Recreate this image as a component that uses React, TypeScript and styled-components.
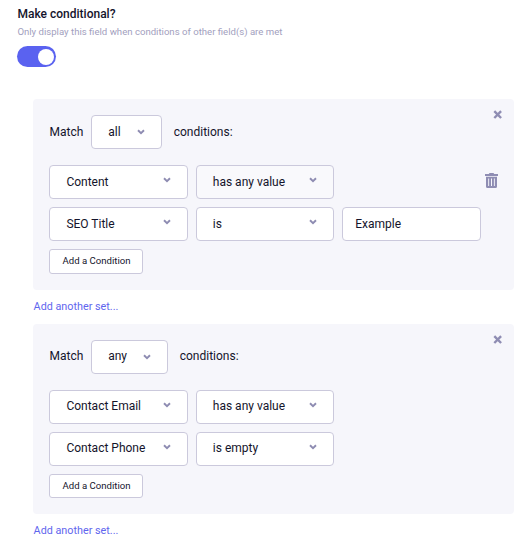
import React from "react";
import styled, { createGlobalStyle } from "styled-components";

const GlobalStyle = createGlobalStyle`
  * { box-sizing: border-box; }
  body {
    margin: 0;
    background: #fff;
    color: #14142b;
    font-family: Roboto, "Liberation Sans", sans-serif;
    font-size: 12px;
    line-height: 16px;
  }
  button, input { font: inherit; color: inherit; }
`;

const Page = styled.main`
  width: 530px;
  height: 560px;
  padding: 6px 16px 0 17px;
  overflow: hidden;
`;

const Title = styled.h1`
  margin: 0;
  padding-left: 0.5px;
  font-size: 12px;
  font-weight: 500;
  line-height: 16px;
`;

const Hint = styled.p`
  margin: 3px 0 0;
  padding-left: 0.4px;
  font-size: 9.6px;
  line-height: 14px;
  color: #a2a0be;
`;

const Toggle = styled.button`
  display: flex;
  justify-content: flex-end;
  align-items: center;
  width: 39px;
  height: 21px;
  margin: 7px 0 32px;
  padding: 0 2px;
  border: 0;
  border-radius: 11px;
  background: #5a62f0;
`;

const Knob = styled.span`
  width: 16px;
  height: 16px;
  border-radius: 50%;
  background: #fff;
`;

const Panel = styled.section<{ $height: number }>`
  position: relative;
  height: ${(p) => p.$height}px;
  margin-left: 16px;
  padding: 16px;
  border-radius: 4px;
  background: #f6f6fb;
`;

const Close = styled.button`
  position: absolute;
  top: 11px;
  right: 12px;
  display: flex;
  padding: 0;
  border: 0;
  background: none;
`;

const MatchRow = styled.div`
  display: flex;
  align-items: center;
  height: 34px;
  margin-bottom: 16px;
`;

const MatchLabel = styled.span<{ $shift: number }>`
  width: 42px;
  padding-left: 0.5px;
  padding-bottom: ${(p) => p.$shift}px;
`;

const MatchTail = styled.span<{ $shift: number }>`
  margin-left: 11.7px;
  padding-bottom: ${(p) => p.$shift}px;
`;

const SelectBox = styled.button<{ $width: number; $inset: number; $muted?: boolean }>`
  display: flex;
  align-items: center;
  justify-content: space-between;
  flex: none;
  width: ${(p) => p.$width}px;
  height: 34px;
  padding: 0 16px 0 ${(p) => p.$inset}px;
  border: 1px solid #cbc9dc;
  border-radius: 4px;
  background: ${(p) => (p.$muted ? "#f9f9fc" : "#fff")};
  text-align: left;
`;

const SelectText = styled.span<{ $shift: number }>`
  padding-bottom: ${(p) => p.$shift}px;
`;

const ChevronSlot = styled.span<{ $shift: number }>`
  display: flex;
  padding-bottom: ${(p) => p.$shift}px;
`;

const Row = styled.div`
  display: flex;
  gap: 8px;
  margin-bottom: 8px;
`;

const ValueInput = styled.input`
  width: 139px;
  height: 34px;
  padding: 0 12.2px 1px;
  border: 1px solid #cbc9dc;
  border-radius: 4px;
  background: #fff;
  outline: none;
`;

const Trash = styled.button`
  display: flex;
  align-items: center;
  margin: 0 0 0 auto;
  padding: 0 0 3px;
  border: 0;
  background: none;
`;

const AddCondition = styled.button<{ $height: number }>`
  display: block;
  width: 94px;
  height: ${(p) => p.$height}px;
  padding: 0 0 1px 1px;
  border: 1px solid #cbc9dc;
  border-radius: 3px;
  background: #fff;
  font-size: 9.6px;
  line-height: 20px;
`;

const AddSet = styled.a`
  display: block;
  width: max-content;
  height: 34px;
  margin-left: 16.6px;
  padding-top: 9px;
  font-size: 10.8px;
  color: #5f66ee;
`;

const Chevron = () => (
  <svg width="8" height="6" viewBox="0 0 8 6" fill="none">
    <path d="M1 1.2 4 4.1 7 1.2" stroke="#8e8cb2" strokeWidth="1.9" />
  </svg>
);

const Cross = () => (
  <svg width="9" height="9" viewBox="0 0 9 9" fill="none">
    <path d="m1.3 1.2 6.8 6.8m0-6.8L1.3 8" stroke="#8f8db3" strokeWidth="2.4" />
  </svg>
);

const TrashIcon = () => (
  <svg width="13" height="15" viewBox="0 0 13 15">
    <path fill="#8f8db3" d="M4.5 0h4l.7 1H13v2H0V1h3.8z" />
    <path
      fill="#8f8db3"
      fillRule="evenodd"
      d="M1 3.7h11v9.8a1.5 1.5 0 0 1-1.5 1.5h-8A1.5 1.5 0 0 1 1 13.5zM3.2 5.5v7.5h.9V5.5zm2.8 0v7.5h1V5.5zm2.9 0v7.5h.9V5.5z"
    />
  </svg>
);

type SelectProps = {
  value: string;
  width: number;
  inset?: number;
  muted?: boolean;
  shift: number;
  lift?: number;
};

const Select = ({ value, width, inset = 16.4, muted, shift, lift = 4 }: SelectProps) => (
  <SelectBox type="button" $width={width} $inset={inset} $muted={muted}>
    <SelectText $shift={shift}>{value}</SelectText>
    <ChevronSlot $shift={lift}>
      <Chevron />
    </ChevronSlot>
  </SelectBox>
);

type Condition = { field: string; operator: string; value?: string; active?: boolean };
type ConditionSet = {
  match: string;
  matchWidth: number;
  height: number;
  buttonHeight: number;
  shift: number;
  conditions: Condition[];
};

const sets: ConditionSet[] = [
  {
    match: "all",
    matchWidth: 71,
    height: 191,
    buttonHeight: 25,
    shift: 0,
    conditions: [
      { field: "Content", operator: "has any value", active: true },
      { field: "SEO Title", operator: "is", value: "Example" },
    ],
  },
  {
    match: "any",
    matchWidth: 77,
    height: 190,
    buttonHeight: 24,
    shift: 2,
    conditions: [
      { field: "Contact Email", operator: "has any value" },
      { field: "Contact Phone", operator: "is empty" },
    ],
  },
];

export default function App() {
  return (
    <Page>
      <GlobalStyle />
      <Title>Make conditional?</Title>
      <Hint>Only display this field when conditions of other field(s) are met</Hint>
      <Toggle type="button" role="switch" aria-checked="true" aria-label="Make conditional">
        <Knob />
      </Toggle>
      {sets.map((set) => (
        <React.Fragment key={set.match}>
          <Panel $height={set.height}>
            <Close type="button" aria-label="Remove set">
              <Cross />
            </Close>
            <MatchRow>
              <MatchLabel $shift={set.shift}>Match</MatchLabel>
              <Select value={set.match} width={set.matchWidth} inset={16.2} shift={set.shift} lift={0} />
              <MatchTail $shift={set.shift}>conditions:</MatchTail>
            </MatchRow>
            {set.conditions.map((c) => (
              <Row key={c.field}>
                <Select value={c.field} width={139} shift={set.shift} />
                <Select value={c.operator} width={138} inset={15.8} muted={c.active} shift={set.shift} />
                {c.value && <ValueInput defaultValue={c.value} aria-label="Value" />}
                {c.active && (
                  <Trash type="button" aria-label="Delete condition">
                    <TrashIcon />
                  </Trash>
                )}
              </Row>
            ))}
            <AddCondition type="button" $height={set.buttonHeight}>
              Add a Condition
            </AddCondition>
          </Panel>
          <AddSet>Add another set...</AddSet>
        </React.Fragment>
      ))}
    </Page>
  );
}
